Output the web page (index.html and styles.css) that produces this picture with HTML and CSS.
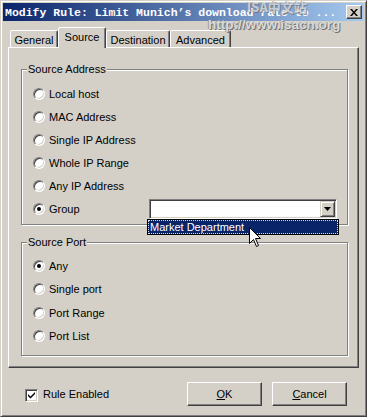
FILE: index.html
```html
<!DOCTYPE html>
<html>
<head>
<meta charset="utf-8">
<link rel="stylesheet" href="styles.css">
</head>
<body>
<div class="window">
  <div class="titlebar">
    <span class="title">Modify Rule: Limit Munich’s download rate to ...</span>
    <span class="close"><svg width="8" height="7" viewBox="0 0 8 7"><path d="M0 0h2l2 2.5L6 0h2L5 3.5 8 7H6L4 4.5 2 7H0l3-3.5z" fill="#000"/></svg></span>
    <div class="watermark"><span class="wm1">ISA中文站</span><span class="wm2">http://www.isacn.org</span></div>
  </div>
  <div class="main">
    <div class="tabs">
      <div class="tab t-general">General</div>
      <div class="tab t-source active">Source</div>
      <div class="tab t-dest">Destination</div>
      <div class="tab t-adv">Advanced</div>
    </div>
    <div class="panel">
      <fieldset class="group g1">
        <legend>Source Address</legend>
        <div class="opt"><span class="radio"></span><span>Local host</span></div>
        <div class="opt"><span class="radio"></span><span>MAC Address</span></div>
        <div class="opt"><span class="radio"></span><span>Single IP Address</span></div>
        <div class="opt"><span class="radio"></span><span>Whole IP Range</span></div>
        <div class="opt"><span class="radio"></span><span>Any IP Address</span></div>
        <div class="opt"><span class="radio on"></span><span>Group</span>
          <div class="combo">
            <div class="combo-btn"><svg width="7" height="4" viewBox="0 0 7 4"><path d="M0 0h7L3.5 4z" fill="#000"/></svg></div>
            <div class="combo-list"><div class="combo-item">Market Department</div></div>
          </div>
        </div>
      </fieldset>
      <fieldset class="group g2">
        <legend>Source Port</legend>
        <div class="opt"><span class="radio on"></span><span>Any</span></div>
        <div class="opt"><span class="radio"></span><span>Single port</span></div>
        <div class="opt"><span class="radio"></span><span>Port Range</span></div>
        <div class="opt"><span class="radio"></span><span>Port List</span></div>
      </fieldset>
    </div>
    <div class="footer">
      <div class="check"><span class="box"><svg width="7" height="7" viewBox="0 0 7 7"><path d="M0 2l2.5 2.5L7 0v2L2.5 6.5 0 4z" fill="#000"/></svg></span><span>Rule Enabled</span></div>
      <div class="buttons">
        <div class="btn"><span><u>O</u>K</span></div>
        <div class="btn"><span><u>C</u>ancel</span></div>
      </div>
    </div>
  </div>
  <svg class="cursor" width="13" height="21" viewBox="0 0 13 21"><path d="M0.5 0.5V16.5L4.5 12.5L7.5 19.5L9.5 18.5L6.5 11.5H11.5Z" fill="#fff" stroke="#000" stroke-width="1"/></svg>
</div>
</body>
</html>
```

FILE: styles.css
```css
* { box-sizing: border-box; }
body {
  margin: 0;
  background: #d4d0c8;
  font-family: "Liberation Sans", Arial, sans-serif;
  font-size: 11px;
  color: #000;
}
.window {
  position: relative;
  width: 367px;
  height: 417px;
  background: #d4d0c8;
  border: 1px solid;
  border-color: #d4d0c8 #404040 #404040 #d4d0c8;
  box-shadow: inset 1px 1px #fff, inset -1px -1px #808080;
  padding: 2px;
  display: flex;
  flex-direction: column;
  overflow: hidden;
}
.titlebar {
  position: relative;
  flex: none;
  height: 18px;
  background: linear-gradient(to right, #0a246a, #a6caf0);
  display: flex;
  align-items: center;
  justify-content: space-between;
  padding: 0 2px 0 2px;
}
.title {
  font-family: "Liberation Mono", monospace;
  font-weight: bold;
  font-size: 11.5px;
  color: #fff;
  white-space: nowrap;
}
.close {
  width: 16px;
  height: 14px;
  background: #d4d0c8;
  border: 1px solid;
  border-color: #fff #404040 #404040 #fff;
  box-shadow: inset -1px -1px #808080;
  display: flex;
  align-items: center;
  justify-content: center;
  position: relative;
  z-index: 6;
}
.watermark {
  position: absolute;
  left: 0;
  top: 0;
  width: 100%;
  height: 0;
  z-index: 5;
  font-weight: bold;
  color: #dcdcdc;
  text-shadow: 1px 1px 0 #6e6e6e, -1px 0 0 #9a9a9a;
}
.wm1 {
  position: absolute;
  left: 244px;
  top: -3px;
  font-family: "Noto Sans CJK SC", "Liberation Sans", sans-serif;
  font-size: 13px;
  line-height: 14px;
  opacity: 0.75;
}
.wm2 {
  position: absolute;
  left: 205px;
  top: 14px;
  font-family: "Liberation Sans", sans-serif;
  font-size: 13.5px;
  line-height: 15px;
  opacity: 0.95;
}
.main {
  flex: 1;
  display: flex;
  flex-direction: column;
  padding: 6px 5px 0 5px;
}
.tabs {
  flex: none;
  display: flex;
  align-items: flex-end;
  height: 20px;
  padding-left: 2px;
  position: relative;
  z-index: 1;
}
.tab {
  height: 17px;
  border: 1px solid;
  border-bottom: none;
  border-color: #fff #404040 transparent #fff;
  box-shadow: inset -1px 0 #808080;
  border-radius: 2px 2px 0 0;
  display: flex;
  align-items: center;
  justify-content: center;
  background: #d4d0c8;
  padding-top: 1px;
}
.t-general { width: 48px; }
.t-source { width: 48px; }
.t-dest { width: 64px; }
.t-adv { width: 61px; }
.tab.active {
  height: 21px;
  margin-bottom: -1px;
  padding-bottom: 3px;
}
.panel {
  flex: none;
  height: 321px;
  border: 1px solid;
  border-color: #fff #404040 #404040 #fff;
  box-shadow: inset -1px -1px #808080;
  padding: 15px 10px 0 12px;
}
.group {
  margin: 0;
  min-width: 0;
  border: 1px solid #808080;
  box-shadow: inset 1px 1px #fff, 1px 1px #fff;
  padding: 6px 10px 4px 11px;
}
.group legend {
  padding: 0 1px;
  margin-left: -6px;
  line-height: 13px;
  background: #d4d0c8;
}
.g2 {
  margin-top: 11px;
  padding-top: 5px;
  padding-bottom: 7px;
}
.opt {
  display: flex;
  align-items: center;
  height: 23px;
}
.g2 .opt { height: 23.5px; }
.radio {
  flex: none;
  width: 12px;
  height: 12px;
  border-radius: 50%;
  background: #fff;
  border: 1px solid;
  border-color: #808080 #fff #fff #808080;
  box-shadow: inset 1px 1px #404040, inset -1px -1px #d4d0c8;
  margin-right: 4px;
  display: flex;
  align-items: center;
  justify-content: center;
}
.radio.on::after {
  content: "";
  width: 4px;
  height: 4px;
  border-radius: 50%;
  background: #000;
}
.combo {
  position: relative;
  margin-left: auto;
  width: 188px;
  height: 20px;
  background: #fff;
  border: 1px solid;
  border-color: #808080 #fff #fff #808080;
  box-shadow: inset 1px 1px #404040, inset -1px -1px #d4d0c8;
  padding: 1px;
  display: flex;
  justify-content: flex-end;
}
.combo-btn {
  width: 15px;
  height: 16px;
  background: #d4d0c8;
  border: 1px solid;
  border-color: #d4d0c8 #404040 #404040 #d4d0c8;
  box-shadow: inset 1px 1px #fff, inset -1px -1px #808080;
  display: flex;
  align-items: center;
  justify-content: center;
}
.combo-list {
  position: absolute;
  left: -3px;
  top: 19px;
  width: 192px;
  height: 16px;
  background: #0a246a;
  border: 1px solid #000;
  padding: 0;
  z-index: 3;
}
.combo-item {
  height: 100%;
  border: 1px dotted #e0e0e0;
  color: #fff;
  line-height: 12px;
  padding-left: 1px;
}
.footer {
  flex: 1;
  display: flex;
  align-items: center;
  padding: 6px 12px 0 17px;
}
.check {
  display: flex;
  align-items: center;
}
.box {
  width: 13px;
  height: 13px;
  background: #fff;
  border: 1px solid;
  border-color: #808080 #fff #fff #808080;
  box-shadow: inset 1px 1px #404040, inset -1px -1px #d4d0c8;
  display: flex;
  align-items: center;
  justify-content: center;
  margin-right: 5px;
  margin-top: 3px;
}
.buttons {
  margin-left: auto;
  display: flex;
  gap: 10px;
}
.btn {
  width: 75px;
  height: 24px;
  border: 1px solid;
  border-color: #fff #404040 #404040 #fff;
  box-shadow: inset -1px -1px #808080;
  display: flex;
  align-items: center;
  justify-content: center;
}
.cursor {
  position: absolute;
  left: 248px;
  top: 226px;
  z-index: 10;
}
```
